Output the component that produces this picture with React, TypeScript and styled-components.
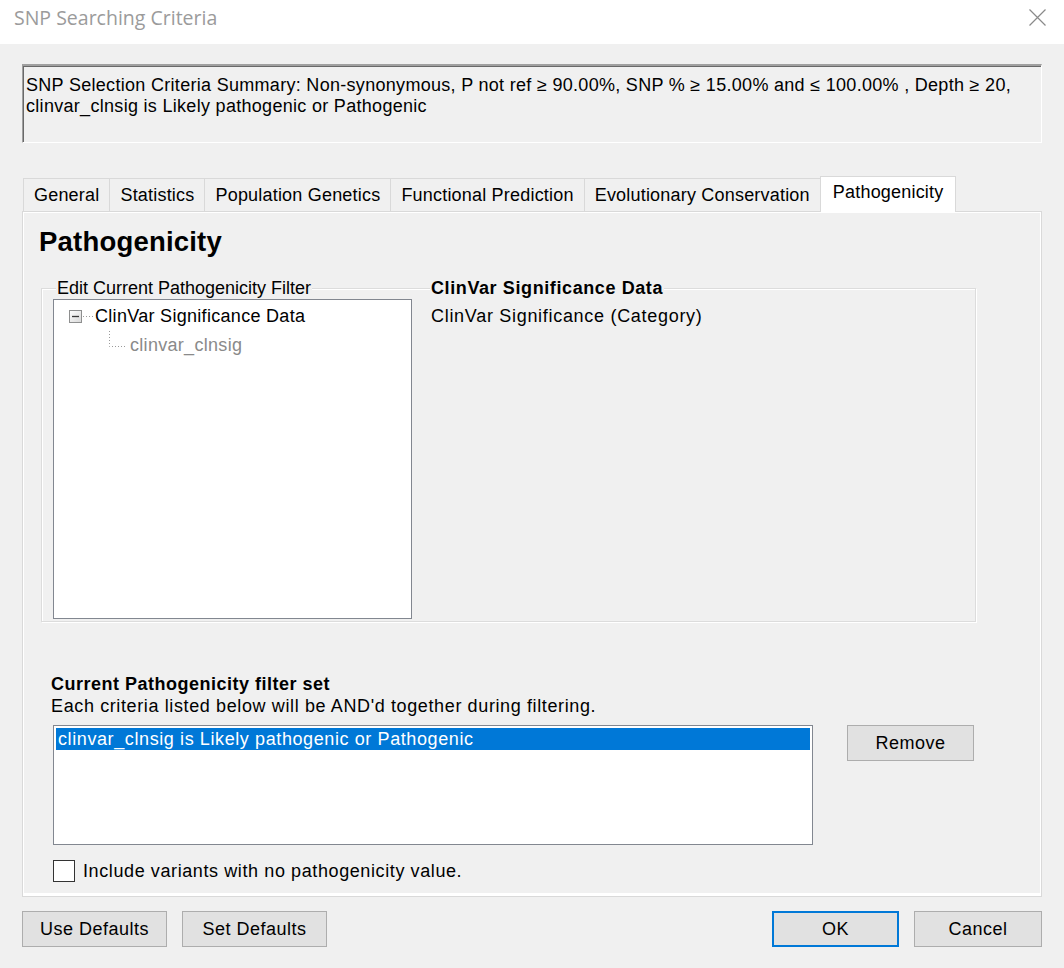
import React from "react";
import styled, { createGlobalStyle, css } from "styled-components";

const GlobalStyle = createGlobalStyle`
  html, body { margin: 0; padding: 0; background: #f0f0f0; }
  body { font-family: "Liberation Sans", Arial, sans-serif; color: #000; }
  * { box-sizing: border-box; }
`;

const Window = styled.div`
  width: 1064px;
  height: 968px;
  display: flex;
  flex-direction: column;
  background: #f0f0f0;
  overflow: hidden;
`;

const TitleBar = styled.div`
  height: 44px;
  flex: none;
  background: #ffffff;
  display: flex;
  align-items: center;
  justify-content: space-between;
  padding: 0 18px 9px 14px;
`;

const Title = styled.span`
  font-family: "Open Sans", "Liberation Sans", sans-serif;
  font-size: 19.5px;
  letter-spacing: 0px;
  color: #9b9b9b;
`;

const Body = styled.div`
  flex: 1;
  display: flex;
  flex-direction: column;
  padding: 20px 22px 0 22px;
`;

const Summary = styled.div`
  width: 1020px;
  height: 79px;
  background: #f0f0f0;
  border-top: 2px solid #a0a0a0;
  border-left: 1px solid #a0a0a0;
  border-right: 1px solid #ffffff;
  border-bottom: 1px solid #ffffff;
  box-shadow: inset 0 1px 0 #696969, inset 1px 0 0 #696969;
  padding: 9px 2px 0 3px;
  font-size: 18px;
  line-height: 21px;
  letter-spacing: 0.3px;
`;

const TabStrip = styled.div`
  display: flex;
  align-items: flex-end;
  margin-top: 33px;
  padding-left: 1px;
  height: 35px;
  position: relative;
  z-index: 1;
`;

const Tab = styled.div<{ $active?: boolean }>`
  height: 33px;
  padding: 0 10px 0 10px;
  display: flex;
  align-items: center;
  font-size: 18px;
  letter-spacing: 0.2px;
  color: #000;
  background: #f0f0f0;
  border: 1px solid #d9d9d9;
  border-bottom: none;
  border-left-width: 0;
  &:first-child { border-left-width: 1px; }
  ${(p) =>
    p.$active &&
    css`
      height: 36px;
      margin-bottom: -1px;
      background: #ffffff;
      border-left-width: 1px;
      margin-left: -1px;
      padding: 0 12px 4px 12px;
    `}
`;

const TabPanel = styled.div`
  width: 1020px;
  height: 686px;
  border: 1px solid #d9d9d9;
  box-shadow: inset 1px 1px 0 #ffffff, inset -1px -1px 0 #ffffff, inset 0 -3px 0 #ffffff;
  background: #f0f0f0;
  padding: 15px 0 0 16px;
  display: flex;
  flex-direction: column;
`;

const Heading = styled.h1`
  margin: 0;
  font-size: 27.5px;
  font-weight: bold;
  line-height: 30px;
  letter-spacing: 0.2px;
`;

const GroupBox = styled.div`
  position: relative;
  margin-top: 31px;
  margin-left: 2px;
  width: 935px;
  height: 334px;
  border: 1px solid #dcdcdc;
  box-shadow: inset 1px 1px 0 #ffffff, 1px 1px 0 #ffffff;
  display: flex;
  gap: 19px;
  padding: 10px 0 0 11px;
`;

const Legend = styled.span<{ $bold?: boolean; $left: number }>`
  position: absolute;
  top: -11px;
  left: ${(p) => p.$left}px;
  background: #f0f0f0;
  padding: 0 1px;
  font-size: 18px;
  font-weight: ${(p) => (p.$bold ? "bold" : "normal")};
  letter-spacing: ${(p) => (p.$bold ? "0.6px" : "0px")};
  line-height: 20px;
`;

const TreeView = styled.div`
  width: 359px;
  height: 320px;
  background: #ffffff;
  border: 1px solid #828790;
  padding: 2px 0 0 14px;
  display: flex;
  flex-direction: column;
`;

const TreeRow = styled.div<{ $child?: boolean }>`
  display: flex;
  align-items: center;
  height: 29px;
  font-size: 18px;
  letter-spacing: 0.3px;
  color: ${(p) => (p.$child ? "#8a8a8a" : "#000")};
`;

const InfoColumn = styled.div`
  display: flex;
  flex-direction: column;
  padding-top: 7px;
`;

const InfoText = styled.span`
  font-size: 18px;
  letter-spacing: 0.7px;
  color: #000;
`;

const FilterSection = styled.div`
  display: flex;
  flex-direction: column;
  margin-top: 51px;
  margin-left: 12px;
`;

const BoldLabel = styled.div`
  font-size: 18px;
  font-weight: bold;
  letter-spacing: 0.5px;
  line-height: 22px;
`;

const PlainLabel = styled.div`
  font-size: 18px;
  letter-spacing: 0.62px;
  line-height: 22px;
`;

const ListRow = styled.div`
  display: flex;
  align-items: flex-start;
  gap: 34px;
  margin-top: 8px;
  margin-left: 2px;
`;

const ListBox = styled.div`
  width: 760px;
  height: 120px;
  background: #ffffff;
  border: 1px solid #828790;
  padding: 2px;
`;

const ListItem = styled.div<{ $selected?: boolean }>`
  height: 22px;
  line-height: 22px;
  padding-left: 2px;
  font-size: 18px;
  letter-spacing: 0.6px;
  background: ${(p) => (p.$selected ? "#0078d7" : "transparent")};
  color: ${(p) => (p.$selected ? "#ffffff" : "#000")};
`;

const Button = styled.button<{ $width: number; $default?: boolean }>`
  width: ${(p) => p.$width}px;
  height: 36px;
  background: #e1e1e1;
  border: ${(p) => (p.$default ? "2px solid #0078d7" : "1px solid #adadad")};
  font-family: "Liberation Sans", Arial, sans-serif;
  font-size: 18px;
  letter-spacing: 0.5px;
  color: #000;
  padding: 0;
  cursor: default;
`;

const CheckRow = styled.label`
  display: flex;
  align-items: center;
  gap: 8px;
  margin-top: 15px;
  margin-left: 2px;
  font-size: 18px;
  letter-spacing: 0.6px;
`;

const CheckBox = styled.span`
  width: 22px;
  height: 22px;
  background: #ffffff;
  border: 1px solid #333333;
  display: inline-block;
`;

const Footer = styled.div`
  display: flex;
  align-items: center;
  margin-top: 14px;
  gap: 15px;
`;

const Spacer = styled.div`
  flex: 1;
`;

const CloseIcon = () => (
  <svg width="17" height="17" viewBox="0 0 17 17">
    <path d="M0.5 0.5 L16.5 16.5 M16.5 0.5 L0.5 16.5" stroke="#8a8a8a" strokeWidth="1.2" fill="none" />
  </svg>
);

const CollapseIcon = () => (
  <svg width="26" height="14" viewBox="0 0 26 14" style={{ marginLeft: 1 }}>
    <defs>
      <linearGradient id="bx" x1="0" y1="0" x2="1" y2="1">
        <stop offset="0" stopColor="#ffffff" />
        <stop offset="1" stopColor="#d8d8d8" />
      </linearGradient>
    </defs>
    <rect x="0.5" y="0.5" width="12" height="12" fill="url(#bx)" stroke="#8e8f8f" />
    <path d="M3 6.5 H10" stroke="#3a3a3a" strokeWidth="1.3" />
    <path d="M14 6.5 H25" stroke="#9a9a9a" strokeWidth="1" strokeDasharray="1 2" />
  </svg>
);

const ChildLines = () => (
  <svg width="62" height="29" viewBox="0 0 62 29" style={{ alignSelf: "flex-start" }}>
    <path d="M41.5 0 V15.5 H59" stroke="#9a9a9a" strokeWidth="1" strokeDasharray="1 2" fill="none" />
  </svg>
);

const tabs = [
  "General",
  "Statistics",
  "Population Genetics",
  "Functional Prediction",
  "Evolutionary Conservation",
  "Pathogenicity",
];

export default function App() {
  return (
    <>
      <GlobalStyle />
      <Window>
        <TitleBar>
          <Title>SNP Searching Criteria</Title>
          <CloseIcon />
        </TitleBar>
        <Body>
          <Summary>
            SNP Selection Criteria Summary: Non-synonymous, P not ref ≥ 90.00%, SNP % ≥ 15.00% and ≤ 100.00% , Depth ≥ 20,
            clinvar_clnsig is Likely pathogenic or Pathogenic
          </Summary>
          <TabStrip>
            {tabs.map((t) => (
              <Tab key={t} $active={t === "Pathogenicity"}>
                {t}
              </Tab>
            ))}
          </TabStrip>
          <TabPanel>
            <Heading>Pathogenicity</Heading>
            <GroupBox>
              <Legend $left={14}>Edit Current Pathogenicity Filter</Legend>
              <Legend $left={388} $bold>
                ClinVar Significance Data
              </Legend>
              <TreeView>
                <TreeRow>
                  <CollapseIcon />
                  ClinVar Significance Data
                </TreeRow>
                <TreeRow $child>
                  <ChildLines />
                  clinvar_clnsig
                </TreeRow>
              </TreeView>
              <InfoColumn>
                <InfoText>ClinVar Significance (Category)</InfoText>
              </InfoColumn>
            </GroupBox>
            <FilterSection>
              <BoldLabel>Current Pathogenicity filter set</BoldLabel>
              <PlainLabel>Each criteria listed below will be AND'd together during filtering.</PlainLabel>
              <ListRow>
                <ListBox>
                  <ListItem $selected>clinvar_clnsig is Likely pathogenic or Pathogenic</ListItem>
                </ListBox>
                <Button $width={127}>Remove</Button>
              </ListRow>
              <CheckRow>
                <CheckBox />
                Include variants with no pathogenicity value.
              </CheckRow>
            </FilterSection>
          </TabPanel>
          <Footer>
            <Button $width={145}>Use Defaults</Button>
            <Button $width={145}>Set Defaults</Button>
            <Spacer />
            <Button $width={127} $default>
              OK
            </Button>
            <Button $width={128}>Cancel</Button>
          </Footer>
        </Body>
      </Window>
    </>
  );
}
